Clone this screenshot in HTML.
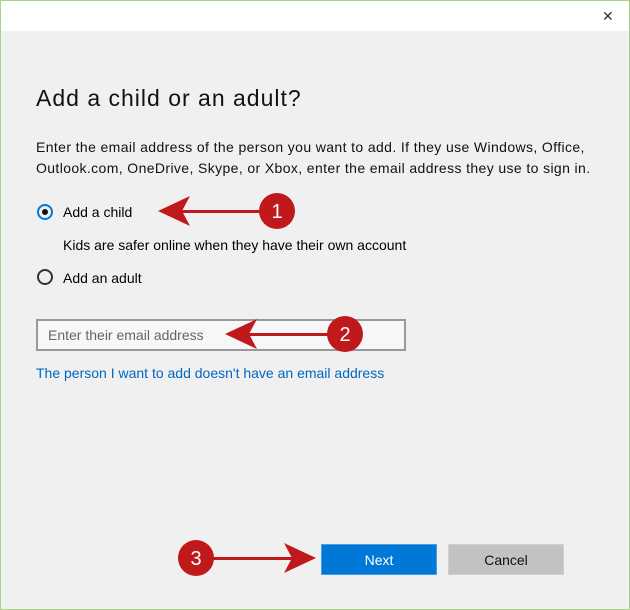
<!DOCTYPE html>
<html><head><style>
body{margin:0;width:630px;height:610px;overflow:hidden;font-family:"Liberation Sans",sans-serif;}
.win{position:absolute;left:0;top:0;width:628px;height:608px;border:1px solid #a6d67f;background:#f0f0f0;}
.tb{position:absolute;left:0;top:0;width:628px;height:30px;background:#fff;}
.x{position:absolute;left:601px;top:7px;font-size:14px;color:#333;}
.t{position:absolute;color:#000;white-space:nowrap;}
h1{position:absolute;left:35px;top:84px;margin:0;font-weight:normal;font-size:23px;letter-spacing:1px;color:#111;}
.radio{position:absolute;width:16px;height:16px;border:2px solid #333;border-radius:50%;box-sizing:border-box;}
.box{position:absolute;left:35px;top:318px;width:370px;height:32px;border:2px solid #999;box-sizing:border-box;background:#f7f7f7;}
.btn{position:absolute;top:543px;width:116px;height:31px;font-size:14px;text-align:center;line-height:31px;}
</style></head><body>
<div class="win">
<div class="tb"><span class="x">✕</span></div>
<h1>Add a child or an adult?</h1>
<div class="t" style="left:35px;top:136px;font-size:14px;letter-spacing:0.38px;line-height:21px;color:#111">Enter the email address of the person you want to add. If they use Windows, Office,<br>Outlook.com, OneDrive, Skype, or Xbox, enter the email address they use to sign in.</div>
<div class="radio" style="left:36px;top:203px;border-color:#0078d7"><div style="position:absolute;left:3px;top:3px;width:6px;height:6px;border-radius:50%;background:#111"></div></div>
<div class="t" style="left:62px;top:203px;font-size:14px">Add a child</div>
<div class="t" style="left:62px;top:236px;font-size:14px">Kids are safer online when they have their own account</div>
<div class="radio" style="left:36px;top:268px"></div>
<div class="t" style="left:62px;top:269px;font-size:14px">Add an adult</div>
<div class="box"><span style="position:absolute;left:10px;top:6px;font-size:14px;color:#666">Enter their email address</span></div>
<div class="t" style="left:35px;top:364px;font-size:14px;color:#0067c0">The person I want to add doesn't have an email address</div>
<div class="btn" style="left:320px;background:#0078d7;color:#fff;border:1px solid #4a9ee6;box-sizing:border-box">Next</div>
<div class="btn" style="left:447px;background:#c2c2c2;color:#111;border:1px solid #d0d0d0;box-sizing:border-box">Cancel</div>
</div>
<svg width="630" height="610" style="position:absolute;left:0;top:0">
<g fill="#c0191c">
<rect x="180" y="210" width="100" height="3"/>
<polygon points="158,211 190,196 182,211 190,226"/>
<circle cx="277" cy="211" r="18"/>
<rect x="245" y="333" width="100" height="3"/>
<polygon points="225,334 257,319 249,334 257,349"/>
<circle cx="345" cy="334" r="18"/>
<rect x="196" y="557" width="100" height="3"/>
<polygon points="316,558 284,543 292,558 284,573"/>
<circle cx="196" cy="558" r="18"/>
</g>
<g fill="#fff" font-family="Liberation Sans" font-size="20" text-anchor="middle">
<text x="277" y="218">1</text><text x="345" y="341">2</text><text x="196" y="565">3</text>
</g>
</svg>
</body></html>
